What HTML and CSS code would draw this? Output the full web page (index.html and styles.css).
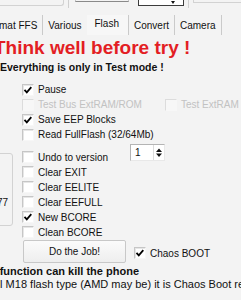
FILE: index.html
```html
<!DOCTYPE html>
<html lang="en">
<head>
    <meta charset="UTF-8">
    <title>Flash</title>
    <link rel="stylesheet" href="styles.css">
</head>
<body>
    <div class="topbar">
        <div class="tb-group"></div>
        <div class="tb-vline"></div>
        <div class="tb-edit"></div>
        <div class="tb-combo"><span class="tb-arrow"></span></div>
        <div class="tb-vline tb-vline2"></div>
        <div class="tb-box"></div>
    </div>

    <div class="tabs">
        <div class="tab first">Format FFS</div>
        <div class="tab no-sep">Various</div>
        <div class="tab active">Flash</div>
        <div class="tab">Convert</div>
        <div class="tab">Camera</div>
    </div>

    <div class="page">
        <div class="title">Think well before try !</div>
        <div class="notice">Everything is only in Test mode !</div>

        <div class="opts">
            <label class="check"><span class="box"><svg viewBox="0 0 10 10"><path d="M1.5 4.8 L3.8 7.3 L8.3 2.2"/></svg></span>Pause</label>
            <div class="row">
                <label class="check wide off"><span class="box"></span>Test Bus ExtRAM/ROM</label>
                <label class="check off"><span class="box"></span>Test ExtRAM</label>
            </div>
            <label class="check"><span class="box"><svg viewBox="0 0 10 10"><path d="M1.5 4.8 L3.8 7.3 L8.3 2.2"/></svg></span>Save EEP Blocks</label>
            <label class="check"><span class="box"></span>Read FullFlash (32/64Mb)</label>
        </div>

        <div class="lower">
            <div class="grp"><span class="grp-text">77</span></div>
            <div class="col">
                <label class="check"><span class="box"></span>Undo to version</label>
                <label class="check"><span class="box"></span>Clear EXIT</label>
                <label class="check"><span class="box"></span>Clear EELITE</label>
                <label class="check"><span class="box"></span>Clear EEFULL</label>
                <label class="check"><span class="box"><svg viewBox="0 0 10 10"><path d="M1.5 4.8 L3.8 7.3 L8.3 2.2"/></svg></span>New BCORE</label>
                <label class="check"><span class="box"></span>Clean BCORE</label>
            </div>
            <div class="spin">
                <span class="spin-val">1</span>
                <span class="spin-btns">
                    <svg viewBox="0 0 10 15"><path d="M2 7 L5 3.5 L8 7 Z M2 8.5 L8 8.5 L5 12 Z"/></svg>
                </span>
            </div>
        </div>

        <div class="actions">
            <button class="job">Do the Job!</button>
            <label class="check chaos"><span class="box"><svg viewBox="0 0 10 10"><path d="M1.5 4.8 L3.8 7.3 L8.3 2.2"/></svg></span>Chaos BOOT</label>
        </div>

        <div class="warn">
            <div class="warn-title">This function can kill the phone</div>
            <div class="warn-text">For all M18 flash type (AMD may be) it is Chaos Boot required</div>
        </div>
    </div>
</body>
</html>
```

FILE: styles.css
```css
body {
    margin: 0;
    width: 241px;
    height: 300px;
    overflow: hidden;
    background: #f3f3f3;
    font-family: "Liberation Sans", Arial, sans-serif;
    color: #111;
}

/* bits of the form above the tabs */
.topbar {
    display: flex;
    align-items: flex-start;
    height: 15px;
}
.tb-group {
    width: 63px;
    height: 5px;
    border-right: 1px solid #d2d2d2;
    border-bottom: 1px solid #d2d2d2;
    border-bottom-right-radius: 3px;
}
.tb-vline {
    margin-left: 4px;
    width: 0;
    height: 8px;
    border-left: 1px solid #cfcfcf;
}
.tb-edit {
    margin-left: 6px;
    width: 52px;
    height: 1px;
    border: 1px solid #c4c4c4;
    border-top: none;
    border-bottom-color: #8a8a8a;
}
.tb-combo {
    position: relative;
    margin-left: 9px;
    width: 44px;
    height: 5px;
    border: 1px solid #3c3c3c;
    border-top: none;
    background: #fff;
}
.tb-arrow {
    position: absolute;
    right: 8px;
    top: 1px;
    border-left: 2px solid transparent;
    border-right: 2px solid transparent;
    border-top: 3px solid #111;
}
.tb-vline2 {
    margin-left: 4px;
}
.tb-box {
    margin-left: 4px;
    flex: 1;
    height: 2px;
    border: 1px solid #d2d2d2;
    border-top: none;
    border-right: none;
}

/* tab strip */
.tabs {
    display: flex;
    height: 20px;
    margin-left: -21px;
}
.tab {
    padding: 4.5px 5px 0;
    font-size: 10px;
    line-height: 12px;
    border-right: 1px solid #cacaca;
    white-space: nowrap;
}
.tab.no-sep {
    border-right: none;
}
.tab.active {
    padding: 2.5px 9px 0 8px;
    background: #f7f7f7;
}

.page {
    padding-top: 2px;
}
.title {
    margin-left: -6px;
    font-size: 19px;
    font-weight: bold;
    line-height: 22px;
    color: #e31e24;
    white-space: nowrap;
}
.notice {
    margin-top: 1px;
    font-size: 10.5px;
    font-weight: bold;
    line-height: 14px;
    white-space: nowrap;
}

/* checkboxes */
.check {
    display: flex;
    align-items: center;
    gap: 4px;
    height: 15px;
    font-size: 10px;
    white-space: nowrap;
}
.box {
    display: block;
    box-sizing: border-box;
    width: 12px;
    height: 12px;
    flex: none;
    background: #fff;
    border: 1px solid;
    border-color: #c6c6c6 #f7f7f7 #f7f7f7 #c6c6c6;
    box-shadow: inset 1px 1px 0 #e6e6e6;
}
.box svg {
    display: block;
    width: 10px;
    height: 10px;
}
.box path {
    fill: none;
    stroke: #000;
    stroke-width: 1.8;
}
.check.off {
    color: #c2c2c2;
}
.check.off .box {
    background: #f7f7f7;
    border-color: #dcdcdc #f7f7f7 #f7f7f7 #dcdcdc;
    box-shadow: none;
}
.opts {
    margin: 8px 0 0 22px;
}
.row {
    display: flex;
}
.wide {
    width: 143px;
}

/* lower block with the spin box */
.lower {
    display: flex;
    align-items: flex-start;
}
.grp {
    margin: 11px 0 0 -40px;
    width: 51px;
    height: 71px;
    border: 1px solid #d2d2d2;
    border-radius: 3px;
    box-sizing: content-box;
    text-align: right;
}
.grp-text {
    display: block;
    padding: 42px 4px 0 0;
    font-size: 10px;
    line-height: 14px;
}
.col {
    margin-left: 9px;
    padding-top: 7.5px;
    width: 108px;
}
.spin {
    display: flex;
    margin-top: 2px;
    width: 35px;
    height: 17px;
    box-sizing: border-box;
    background: #fff;
    border: 1px solid;
    border-color: #b4b4b4 #e8e8e8 #e8e8e8 #b4b4b4;
}
.spin-val {
    width: 24px;
    padding-left: 4px;
    font-size: 10px;
    line-height: 15px;
    box-sizing: border-box;
    border-right: 1px solid #dcdcdc;
}
.spin-btns svg {
    display: block;
    width: 10px;
    height: 15px;
}
.spin-btns path {
    fill: #111;
}

.actions {
    display: flex;
    align-items: center;
    margin-top: 0.5px;
}
.job {
    margin-left: 23px;
    width: 103px;
    height: 23px;
    padding: 0;
    font-family: "Liberation Sans", Arial, sans-serif;
    font-size: 10px;
    color: #111;
    background: linear-gradient(#fbfbfb, #eeeeee);
    border: 1px solid #c8c8c8;
    border-radius: 2px;
}
.chaos {
    margin: 3px 0 0 8px;
}

.warn {
    margin-top: 1.5px;
    font-size: 11px;
    line-height: 13px;
    white-space: nowrap;
}
.warn-title {
    margin-left: -26px;
    font-weight: bold;
}
.warn-text {
    margin-left: -28px;
}
```
